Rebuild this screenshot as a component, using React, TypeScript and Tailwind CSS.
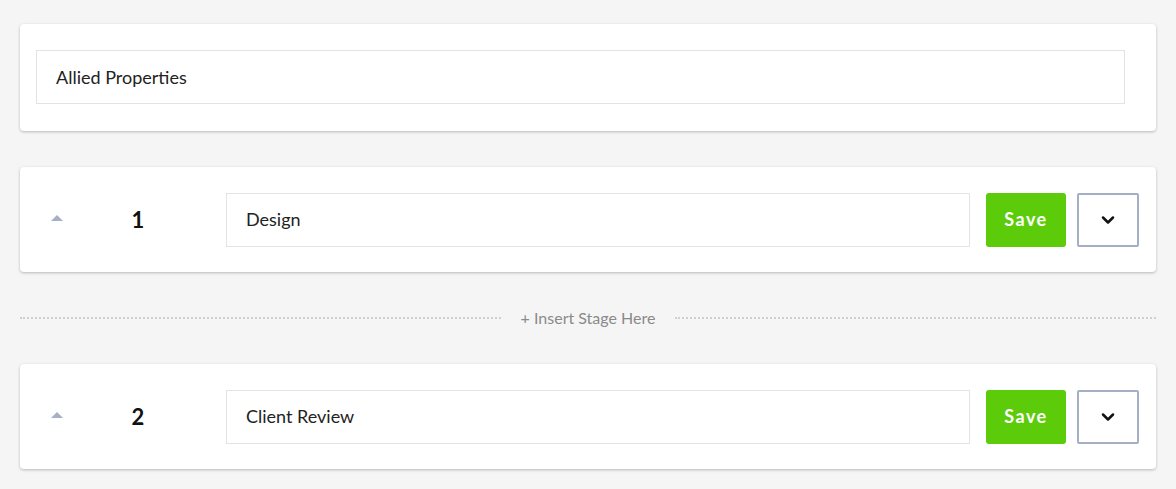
import { ChevronDown } from 'lucide-react';

const STAGES = [
  { n: 1, name: 'Design' },
  { n: 2, name: 'Client Review' },
];

function Stage({ n, name }: { n: number; name: string }) {
  return (
    <div className="flex h-[105px] items-center rounded-sm bg-white pr-[17px] shadow-[0_1px_3px_rgba(0,0,0,0.25)]">
      <div className="flex w-[62px] pl-[31px]">
        <span className="mb-1 h-0 w-0 border-x-[6px] border-b-[6px] border-x-transparent border-b-[#a5b0c4]" />
      </div>
      <div className="w-[112px] text-center text-[22px] font-bold text-[#111]">{n}</div>
      <div className="ml-[32px] flex h-[54px] flex-1 items-center border border-[#e3e3e3] px-[19px] text-[18px] text-[#222]">
        {name}
      </div>
      <button className="ml-[16px] h-[54px] w-[80px] rounded-[3px] bg-[#5ccc0a] text-[18px] font-bold tracking-[0.08em] text-white">
        Save
      </button>
      <button className="ml-[11px] flex h-[54px] w-[62px] items-center justify-center rounded-[2px] border-2 border-[#a5afc3] bg-white">
        <ChevronDown size={20} strokeWidth={3} className="text-[#111]" />
      </button>
    </div>
  );
}

export default function App() {
  return (
    <div className="min-h-[489px] bg-[#f5f5f5] px-[20px] pt-[24px] font-[Lato,sans-serif]">
      <div className="rounded-sm bg-white pb-[27px] pl-[16px] pr-[31px] pt-[26px] shadow-[0_1px_3px_rgba(0,0,0,0.25)]">
        <div className="flex h-[54px] items-center border border-[#e3e3e3] px-[19px] text-[18px] text-[#222]">
          Allied Properties
        </div>
      </div>
      <div className="mt-[36px]">
        <Stage {...STAGES[0]} />
      </div>
      <div className="flex h-[92px] items-center gap-[20px]">
        <div className="flex-1 border-t-2 border-dotted border-[#cfcfcf]" />
        <span className="text-[16px] text-[#8a8a8a]">+ Insert Stage Here</span>
        <div className="flex-1 border-t-2 border-dotted border-[#cfcfcf]" />
      </div>
      <Stage {...STAGES[1]} />
    </div>
  );
}
